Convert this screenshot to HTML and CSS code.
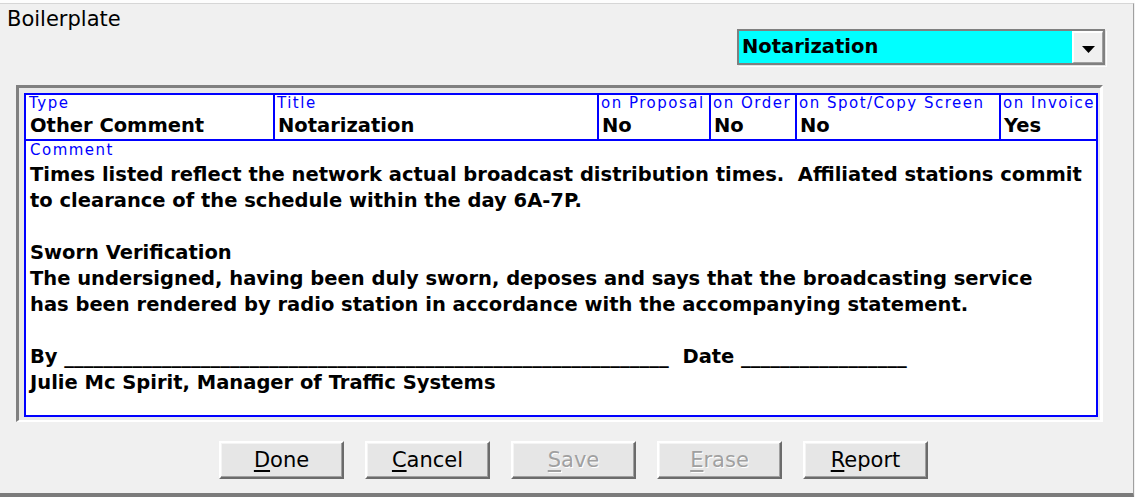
FILE: index.html
```html
<!DOCTYPE html>
<html lang="en">
<head>
<meta charset="utf-8">
<title>Boilerplate</title>
<link rel="stylesheet" href="styles.css">
</head>
<body>
<div class="topcut"></div>
<div class="dialog">
  <div class="top-row">
    <div class="caption">Boilerplate</div>
    <div class="combo">
      <div class="combo-value">Notarization</div>
      <div class="combo-btn">
        <svg class="arrow" width="13" height="7" viewBox="0 0 13 7"><polygon points="0,0 13,0 6.5,7" fill="#000"/></svg>
      </div>
    </div>
  </div>

  <div class="panel">
    <div class="sheet">
      <div class="head">
        <div class="cell first"><div class="lbl">Type</div><div class="val">Other Comment</div></div>
        <div class="cell"><div class="lbl">Title</div><div class="val">Notarization</div></div>
        <div class="cell"><div class="lbl">on Proposal</div><div class="val">No</div></div>
        <div class="cell"><div class="lbl">on Order</div><div class="val">No</div></div>
        <div class="cell"><div class="lbl">on Spot/Copy Screen</div><div class="val">No</div></div>
        <div class="cell"><div class="lbl">on Invoice</div><div class="val">Yes</div></div>
      </div>
      <div class="comment">
        <div class="lbl">Comment</div>
        <div class="text">
          <div class="line">Times listed reflect the network actual broadcast distribution times.&nbsp; Affiliated stations commit</div>
          <div class="line">to clearance of the schedule within the day 6A-7P.</div>
          <div class="line">&nbsp;</div>
          <div class="line">Sworn Verification</div>
          <div class="line">The undersigned, having been duly sworn, deposes and says that the broadcasting service</div>
          <div class="line">has been rendered by radio station in accordance with the accompanying statement.</div>
          <div class="line">&nbsp;</div>
          <div class="line">By ______________________________________________________________&nbsp; Date _________________</div>
          <div class="line">Julie Mc Spirit, Manager of Traffic Systems</div>
        </div>
      </div>
    </div>
  </div>

  <div class="buttons">
    <button class="btn"><u>D</u>one</button>
    <button class="btn"><u>C</u>ancel</button>
    <button class="btn disabled"><u>S</u>ave</button>
    <button class="btn disabled"><u>E</u>rase</button>
    <button class="btn"><u>R</u>eport</button>
  </div>
</div>
</body>
</html>
```

FILE: styles.css
```css
* { box-sizing: border-box; }

html, body {
  margin: 0;
  padding: 0;
  background: #f0f0f0;
  width: 1135px;
  height: 497px;
  overflow: hidden;
  font-family: "DejaVu Sans", sans-serif;
}

.topcut {
  height: 3px;
  background: #fdfdfd;
}

.dialog {
  width: 1134px;
  height: 494px;
  border-top: 1px solid #d6d6d6;
  border-right: 1px solid #a0a0a0;
  border-bottom: 4px solid #7b7b7b;
  background: #f0f0f0;
}

.top-row {
  display: flex;
  align-items: flex-start;
  padding: 3px 28px 0 7px;
}

.caption {
  font-size: 21px;
  line-height: 24px;
  color: #000;
}

.combo {
  margin-left: auto;
  margin-top: 22px;
  width: 368px;
  height: 36px;
  display: flex;
  border: 2px solid #808080;
  box-shadow: 1px 1px 0 #e3e3e3, 2px 2px 0 #ffffff;
}

.combo-value {
  flex: 1;
  background: #00ffff;
  font-weight: bold;
  font-size: 19.5px;
  line-height: 32px;
  padding-left: 3px;
  color: #000;
}

.combo-btn {
  width: 31px;
  background: #f0f0f0;
  border-top: 2px solid #fff;
  border-left: 2px solid #fff;
  border-right: 1px solid #a0a0a0;
  border-bottom: 1px solid #a0a0a0;
  display: flex;
  align-items: center;
  justify-content: center;
  padding-top: 3px;
}

.arrow { display: block; }

.panel {
  margin: 20px 0 0 16px;
  width: 1087px;
  border-top: 3px solid #808080;
  border-left: 3px solid #808080;
  border-right: 3px solid #ffffff;
  border-bottom: 2px solid #ffffff;
  padding: 5px 2px 3px 5px;
  background: #e8e8e8;
}

.sheet {
  width: 1074px;
  height: 324px;
  border: 2px solid #0000ff;
  background: #fff;
}

.head {
  display: grid;
  grid-template-columns: 247px 324px 112px 86px 204px 97px;
  height: 46px;
  border-bottom: 2px solid #0000ff;
}

.cell {
  padding-top: 1px;
  overflow: hidden;
  white-space: nowrap;
}

.cell + .cell {
  border-left: 2px solid #0000ff;
}

.lbl {
  font-size: 15px;
  line-height: 15px;
  letter-spacing: 1.5px;
  color: #0000ff;
  padding-left: 2px;
  white-space: nowrap;
}

.val {
  margin-top: 4px;
  font-weight: bold;
  font-size: 19.5px;
  line-height: 22px;
  color: #000;
  padding-left: 3px;
}

.first .lbl { padding-left: 3px; }
.first .val { padding-left: 4px; }

.comment {
  padding: 2px 0 0 1px;
}

.comment .lbl { padding-left: 3px; }

.text {
  margin-top: 4px;
  padding-left: 3px;
  font-weight: bold;
  font-size: 19.5px;
  line-height: 26px;
  color: #000;
}

.line {
  white-space: pre;
}

.buttons {
  display: flex;
  gap: 21px;
  margin-top: 19px;
  padding-left: 219px;
}

.btn {
  width: 125px;
  height: 38px;
  margin: 0;
  padding: 0;
  font-family: "DejaVu Sans", sans-serif;
  font-size: 21px;
  line-height: 24px;
  color: #000;
  background: #e6e6e6;
  border: 2px solid;
  border-color: #ffffff #6b6b6b #6b6b6b #ffffff;
  box-shadow: inset -1px -1px 0 #a0a0a0, inset 1px 1px 0 #f4f4f4;
  text-align: center;
}

.btn u {
  text-decoration-thickness: 2px;
  text-underline-offset: 3px;
}

.btn.disabled {
  color: #a0a0a0;
  text-shadow: 1px 1px 0 #ffffff;
}
```
